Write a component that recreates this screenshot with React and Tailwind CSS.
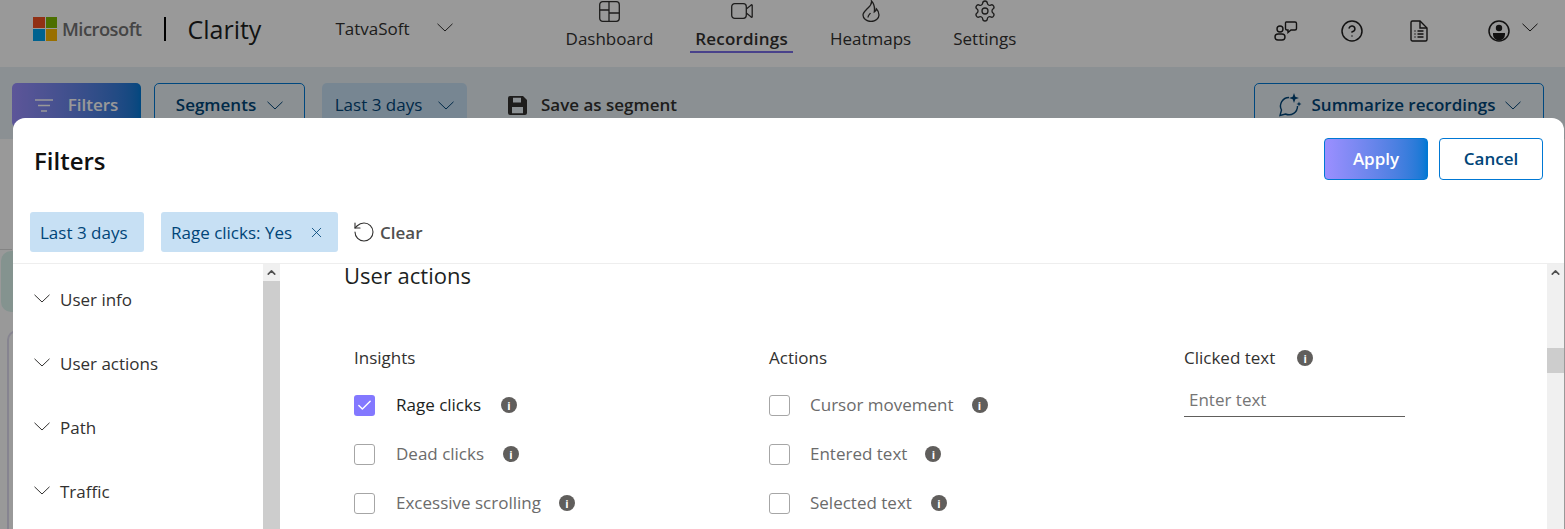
import { ChevronUp, X, RotateCcw, Check, Settings, CircleHelp } from "lucide-react";

const font = "font-['Open_Sans','Noto_Sans',sans-serif]";

function Chevron({ className = "" }) {
  return (
    <svg width="16" height="9" viewBox="0 0 16 9" fill="none" stroke="currentColor" strokeWidth="1" className={`shrink-0 ${className}`}>
      <path d="M.5.8 8 8 15.5.8" />
    </svg>
  );
}

function DashIcon() {
  return (
    <svg width="21" height="21" viewBox="0 0 21 21" fill="none" stroke="currentColor" strokeWidth="1.3">
      <rect x=".7" y=".7" width="19.6" height="19.6" rx="3" />
      <path d="M10 .7v19.6M.7 9h9.3M10 12h10.3" />
    </svg>
  );
}

function VideoIcon() {
  return (
    <svg width="22" height="16" viewBox="0 0 22 16" fill="none" stroke="currentColor" strokeWidth="1.3">
      <rect x=".7" y=".7" width="14.6" height="14.6" rx="3" />
      <path d="M15.3 6 20 2.2a.6.6 0 0 1 1.2.4v10.8a.6.6 0 0 1-1.2.4L15.3 10" />
    </svg>
  );
}

function FlameIcon() {
  return (
    <svg width="18" height="22" viewBox="0 0 18 22" fill="none" stroke="currentColor" strokeWidth="1.3">
      <path d="M9.5 1c.6 4-2 5.5-5 8.5C2 12 1 13.500 1 15a8 6.500 0 0 0 16 0c0-3-1.500-5-2.700-6.200-.2 1.500-.8 2.500-2 3.200C12.800 8 12 3.500 9.500 1z" />
      <path d="M6 17.500c0-2 1.500-3 2.500-4.500" />
    </svg>
  );
}

function FeedbackIcon() {
  return (
    <svg width="24" height="22" viewBox="0 0 24 22" fill="none" stroke="currentColor" strokeWidth="1.4">
      <circle cx="6" cy="9" r="3" />
      <rect x="1" y="14" width="10" height="6" rx="3" />
      <path d="M12 2h9a1.500 1.500 0 0 1 1.500 1.500v5A1.500 1.500 0 0 1 21 10h-4l-3 2.500V10h-1a1.500 1.500 0 0 1-1.500-1.500v-5A1.500 1.500 0 0 1 12 2z" />
    </svg>
  );
}

function DocIcon() {
  return (
    <svg width="18" height="22" viewBox="0 0 18 22" fill="none" stroke="currentColor" strokeWidth="1.4">
      <path d="M2.500 1H10l7 7v11.500a1.500 1.500 0 0 1-1.500 1.500h-13A1.500 1.500 0 0 1 1 19.500v-17A1.500 1.500 0 0 1 2.500 1z" />
      <path d="M10 1v7h7M4.500 11h1M7.500 11h6M4.500 14h1M7.500 14h6M4.500 17h1M7.500 17h6" />
    </svg>
  );
}

function UserIcon() {
  return (
    <svg width="22" height="22" viewBox="0 0 22 22">
      <circle cx="11" cy="11" r="10" fill="none" stroke="currentColor" strokeWidth="1.5" />
      <circle cx="11" cy="8" r="3.200" fill="currentColor" />
      <path d="M5 13h12v1.500a6 6 0 0 1-12 0z" fill="currentColor" />
    </svg>
  );
}

function SparkChatIcon() {
  return (
    <svg width="25" height="26" viewBox="0 0 25 26" fill="none">
      <path d="M12 5.500a8.500 8.500 0 0 0-7.500 12.500L3 23.500l5.500-1.500A8.500 8.500 0 0 0 20.500 14" stroke="currentColor" strokeWidth="1.4" />
      <path d="M17 1l1.300 3.700L22 6l-3.700 1.300L17 11l-1.300-3.700L12 6l3.700-1.300zM22 9.500l.7 1.800 1.800.7-1.800.7-.7 1.800-.7-1.800-1.800-.7 1.800-.7z" fill="currentColor" />
    </svg>
  );
}

function FilterLines() {
  return (
    <svg width="18" height="13" viewBox="0 0 18 13" fill="none" stroke="currentColor" strokeWidth="1.6">
      <path d="M0 1h18M3 6.500h12M6 12h6" />
    </svg>
  );
}

function SaveIcon() {
  return (
    <svg width="19" height="19" viewBox="0 0 19 19">
      <path fillRule="evenodd" fill="currentColor" d="M2 0h13l4 4v13a2 2 0 0 1-2 2H2a2 2 0 0 1-2-2V2a2 2 0 0 1 2-2zm3 1.800v4.700h8V1.800zM4 11v6.200h11V11z" />
    </svg>
  );
}

function MsLogo() {
  return (
    <div className="grid w-6 h-6 grid-cols-2 gap-px">
      <div className="bg-[#f25022]" />
      <div className="bg-[#7fba00]" />
      <div className="bg-[#00a4ef]" />
      <div className="bg-[#ffb900]" />
    </div>
  );
}

function NavItem({ icon, label, active }) {
  return (
    <div className="flex flex-col items-center">
      <div className="flex h-[22px] items-center">{icon}</div>
      <span className={`mt-[4px] px-[5px] text-[17px] leading-[25px] border-b-2 ${active ? "font-semibold tracking-[0.2px] border-[#7b6fe8]" : "border-transparent"}`}>
        {label}
      </span>
    </div>
  );
}

function InfoDot() {
  return (
    <span className="flex w-4 h-4 items-center justify-center rounded-full bg-[#605e5c] text-white text-[11px] font-bold leading-none">i</span>
  );
}

function CheckRow({ label, checked, labelGap, infoGap }) {
  return (
    <div className="flex items-center h-[22px]">
      {checked ? (
        <span className="flex w-[21px] h-[21px] items-center justify-center rounded-[3px] bg-[#8378ff] text-white">
          <Check size={17} strokeWidth={2} />
        </span>
      ) : (
        <span className="w-[21px] h-[21px] rounded-[3px] border-[1.5px] border-[#a6a6a6]" />
      )}
      <span className={`${labelGap} text-[17px] leading-[22px] ${checked ? "text-[#201f1e]" : "text-[#6b6b6b]"}`}>{label}</span>
      <span className={infoGap}><InfoDot /></span>
    </div>
  );
}

function SideItem({ label }) {
  return (
    <div className="flex items-center h-[24px] text-[#323130]">
      <Chevron className="ml-[1px] -mt-[3px]" />
      <span className="ml-[10px] text-[17px]">{label}</span>
    </div>
  );
}

function ScrollArrow() {
  return (
    <div className="flex h-[17px] items-center justify-center bg-[#f0f0f0]">
      <ChevronUp size={13} strokeWidth={3} className="text-[#505050]" />
    </div>
  );
}

export default function App() {
  return (
    <div className={`${font} relative w-[1565px] h-[529px] overflow-hidden bg-white`}>
      {/* Top nav */}
      <header className="flex h-[67px] items-start bg-white">
        <div className="flex items-center pl-[33px] pt-[15px]">
          <MsLogo />
          <span className="ml-[5px] text-[18.3px] font-semibold tracking-[-0.5px] text-[#737373]">Microsoft</span>
          <div className="ml-[23px] h-[24px] w-[2px] bg-black" />
          <span className="ml-[21px] text-[25px] leading-[26px] text-[#201f1e]">Clarity</span>
          <span className="ml-[74px] text-[17px] text-[#323130]">TatvaSoft</span>
          <Chevron className="ml-[27px] -mt-[3px] text-[#323130]" />
        </div>
        <nav className="flex ml-[108px] gap-[32px] text-[#323130]">
          <NavItem icon={<DashIcon />} label="Dashboard" />
          <NavItem icon={<VideoIcon />} label="Recordings" active />
          <NavItem icon={<FlameIcon />} label="Heatmaps" />
          <NavItem icon={<Settings size={24} strokeWidth={1.3} />} label="Settings" />
        </nav>
        <div className="flex items-center ml-auto pr-[27px] pt-[19px] text-[#201f1e]">
          <FeedbackIcon />
          <CircleHelp size={24} strokeWidth={1.5} className="ml-[42px]" />
          <span className="ml-[46px]"><DocIcon /></span>
          <span className="ml-[60px]"><UserIcon /></span>
          <Chevron className="ml-[12px] -mt-[8px]" />
        </div>
      </header>

      {/* Toolbar behind the dialog */}
      <div className="flex items-start h-[72px] bg-[#e8f1f6] pt-[16px] pl-[12px] pr-[21px]">
        <button className="flex h-[44px] w-[129px] items-center justify-center gap-[15px] rounded-[5px] bg-gradient-to-r from-[#9b8fff] to-[#0078d4] text-white text-[17px] font-semibold">
          <FilterLines />
          Filters
        </button>
        <button className="ml-[13px] flex h-[44px] w-[151px] items-center justify-center gap-[11px] rounded-[5px] border border-[#0078d4] text-[#004578] text-[17px] font-semibold">
          Segments
          <Chevron />
        </button>
        <button className="ml-[17px] flex h-[44px] w-[145px] items-center justify-center gap-[16px] rounded-[5px] bg-[#c7e0f4] text-[#004578] text-[17px]">
          Last 3 days
          <Chevron />
        </button>
        <div className="ml-[41px] flex h-[44px] items-center gap-[14px] text-[#323130] text-[17px] font-semibold">
          <SaveIcon />
          Save as segment
        </div>
        <button className="ml-auto flex h-[44px] w-[290px] items-center justify-center gap-[10px] rounded-[5px] border border-[#0078d4] text-[#004578] text-[17px] font-semibold">
          <SparkChatIcon />
          Summarize recordings
          <Chevron />
        </button>
      </div>

      {/* Page content peeking out left of the dialog */}
      <div className="mt-[110px] h-px w-[12px] bg-[#dddddd]" />
      <div className="mt-[1px] ml-px h-[61px] w-[40px] rounded-[10px] bg-[#dcf5ef]" />
      <div className="mt-[18px] ml-[7px] h-[200px] w-[40px] rounded-tl-[10px] border-l-2 border-t-2 border-[#e0dcf0]" />

      {/* Backdrop */}
      <div className="absolute inset-0 bg-black/40" />

      {/* Filters dialog */}
      <div className="absolute left-[13px] top-[118px] right-px bottom-0 flex flex-col rounded-t-[12px] bg-white">
        <div className="flex h-[85px] items-start justify-between pl-[21px] pr-[21px] pt-[20px]">
          <h2 className="text-[24px] leading-[46px] font-semibold text-[#111]">Filters</h2>
          <div className="flex gap-[11px]">
            <button className="h-[42px] w-[104px] rounded-[4px] border border-[#0078d4] bg-gradient-to-r from-[#9b8fff] to-[#0078d4] text-white text-[17px] font-semibold">Apply</button>
            <button className="h-[42px] w-[104px] rounded-[4px] border border-[#0078d4] text-[#004578] text-[17px] font-semibold">Cancel</button>
          </div>
        </div>

        <div className="flex items-center h-[61px] border-b border-[#eeeeee] pl-[17px] pb-[3px]">
          <span className="flex h-[40px] w-[114px] items-center pl-[10px] pt-[2px] rounded-[3px] bg-[#c7e0f4] text-[17px] text-[#004578]">Last 3 days</span>
          <span className="ml-[17px] flex h-[40px] w-[177px] items-center pl-[10px] pt-[2px] rounded-[3px] bg-[#c7e0f4] text-[17px] text-[#004578]">
            Rage clicks: Yes
            <X size={17} strokeWidth={1.2} className="ml-[16px]" />
          </span>
          <RotateCcw size={24} strokeWidth={1.1} className="ml-[14px] text-[#323130]" />
          <span className="ml-[4px] pt-[2px] text-[17px] font-semibold text-[#505050]">Clear</span>
        </div>

        <div className="flex flex-1 min-h-0">
          {/* Left menu */}
          <aside className="flex w-[267px] shrink-0">
            <div className="flex flex-1 flex-col gap-[40px] pl-[20px] pt-[24px]">
              <SideItem label="User info" />
              <SideItem label="User actions" />
              <SideItem label="Path" />
              <SideItem label="Traffic" />
            </div>
            <div className="w-[17px] bg-[#cdcdcd]">
              <ScrollArrow />
            </div>
          </aside>

          {/* Right panel */}
          <div className="relative flex-1 min-w-0 pl-[64px]">
            <h3 className="text-[22px] leading-[24px] text-[#201f1e] -mt-px">User actions</h3>
            <div className="grid grid-cols-[415px_415px_221px] mt-[59px] ml-[10px]">
              <div>
                <div className="text-[17px] leading-[24px] text-[#323130]">Insights</div>
                <div className="mt-[24px] flex flex-col gap-[27px]">
                  <CheckRow label="Rage clicks" checked labelGap="ml-[21px]" infoGap="ml-[20px]" />
                  <CheckRow label="Dead clicks" labelGap="ml-[21px]" infoGap="ml-[19px]" />
                  <CheckRow label="Excessive scrolling" labelGap="ml-[21px]" infoGap="ml-[18px]" />
                </div>
              </div>
              <div>
                <div className="text-[17px] leading-[24px] text-[#323130]">Actions</div>
                <div className="mt-[24px] flex flex-col gap-[27px]">
                  <CheckRow label="Cursor movement" labelGap="ml-[20px]" infoGap="ml-[18px]" />
                  <CheckRow label="Entered text" labelGap="ml-[20px]" infoGap="ml-[18px]" />
                  <CheckRow label="Selected text" labelGap="ml-[20px]" infoGap="ml-[19px]" />
                </div>
              </div>
              <div>
                <div className="flex items-center gap-[22px] text-[17px] leading-[24px] text-[#323130]">
                  Clicked text
                  <InfoDot />
                </div>
                <div className="mt-[16px] h-[31px] border-b border-[#605e5c] pl-[5px] text-[17px] leading-[28px] text-[#757575]">Enter text</div>
              </div>
            </div>
            <div className="absolute right-0 top-0 bottom-0 w-[17px] bg-[#f0f0f0]">
              <ScrollArrow />
              <div className="mt-[67px] h-[25px] bg-[#cdcdcd]" />
            </div>
          </div>
        </div>
      </div>
    </div>
  );
}
